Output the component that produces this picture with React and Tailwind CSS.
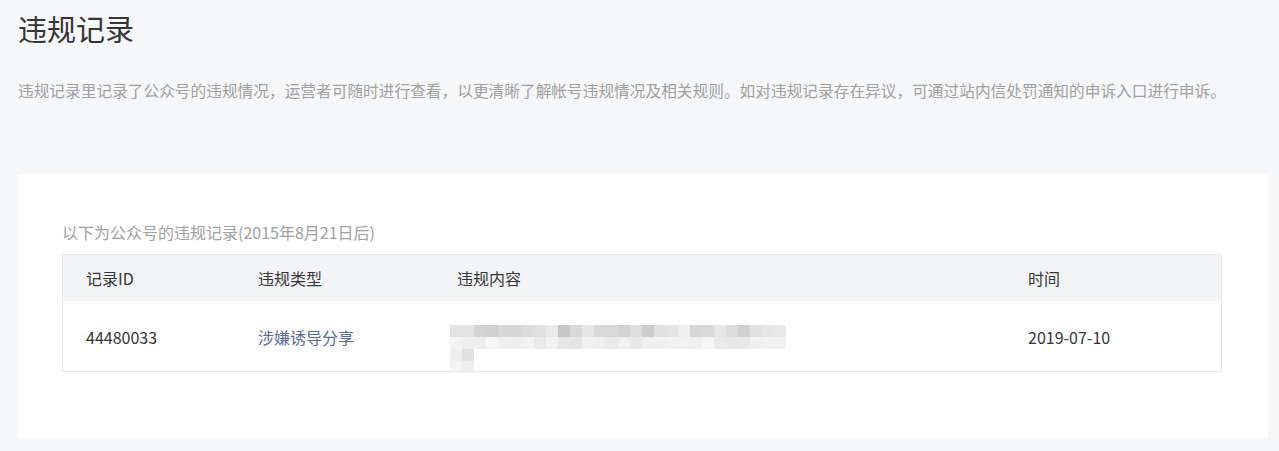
const topRow = ["#e3e3e3","#e3e3e3","#d4d4d4","#d0d0d0","#d7d7d7","#d6d6d6","#dcdcdc","#e0e0e0","#eaeaea","#c8c8c8","#d8d8d8","#e6e6e6","#d9d9d9","#d9d9d9","#d2d2d2","#dedede","#cccccc","#e2e2e2","#e4e4e4","#eeeeee","#d7d7d7","#d9d9d9","#e6e6e6","#dcdcdc","#d0d0d0","#e0e0e0","#e6e6e6","#e8e8e8"];
const bottomRow = ["#f4f4f4","#eeeeee","#eeeeee","#f6f6f6","#f0f0f0","#efefef","#f3f3f3","#e9e9e9","#f2f2f2","#e6e6e6","#e4e4e4","#f1f1f1","#efefef","#e9e9e9","#f1f1f1","#e8e8e8","#f0f0f0","#f0f0f0","#f2f2f2","#f2f2f2","#efefef","#f6f6f6","#eaeaea","#e8e8e8","#e8e8e8","#f0f0f0","#f2f2f2","#f2f2f2"];

const Mosaic = () => (
  <svg width="336" height="48" viewBox="0 0 336 48">
    {topRow.map((c, i) => <rect key={"t" + i} x={i * 12} y="0" width="12" height="12" fill={c} />)}
    {bottomRow.map((c, i) => <rect key={"b" + i} x={i * 12} y="12" width="12" height="12" fill={c} />)}
    <rect x="0" y="24" width="12" height="12" fill="#efefef" />
    <rect x="12" y="24" width="12" height="12" fill="#e2e2e2" />
    <rect x="0" y="36" width="12" height="12" fill="#f3f3f3" />
    <rect x="12" y="36" width="12" height="12" fill="#eeeeee" />
  </svg>
);

const App = () => {
  return (
    <div className="w-full min-h-screen bg-[#f6f7f9] pl-[18px] pr-[11px] pt-[8px] font-['Noto_Sans_CJK_SC','Noto_Sans',sans-serif]">
      <h1 className="text-[29px] leading-[40px] text-[#353535]">违规记录</h1>
      <p className="mt-[31px] text-[15.7px] leading-[24px] text-[#a0a0a0]">
        违规记录里记录了公众号的违规情况，运营者可随时进行查看，以更清晰了解帐号违规情况及相关规则。如对违规记录存在异议，可通过站内信处罚通知的申诉入口进行申诉。
      </p>
      <div className="mt-[71px] bg-white rounded-[2px] pl-[44px] pr-[46px] pt-[46px] pb-[67px]">
        <p className="text-[16px] leading-[24px] text-[#a0a0a0]">以下为公众号的违规记录(2015年8月21日后)</p>
        <div className="mt-[10px] border border-[#e4e8eb]">
          <div className="grid grid-cols-[172px_199px_1fr_216px] h-[46px] items-center bg-[#f3f4f8] text-[16px] text-[#353535]">
            <div className="pl-[23px]">记录ID</div>
            <div className="pl-[23px]">违规类型</div>
            <div className="pl-[23px]">违规内容</div>
            <div className="pl-[23px]">时间</div>
          </div>
          <div className="grid grid-cols-[172px_199px_1fr_216px] h-[70px] items-center text-[16px] text-[#353535]">
            <div className="pl-[23px]">44480033</div>
            <div className="pl-[23px] text-[#576b95]">涉嫌诱导分享</div>
            <div className="pl-[16px] pt-[24px]"><Mosaic /></div>
            <div className="pl-[23px]">2019-07-10</div>
          </div>
        </div>
      </div>
    </div>
  );
};

export default App;
